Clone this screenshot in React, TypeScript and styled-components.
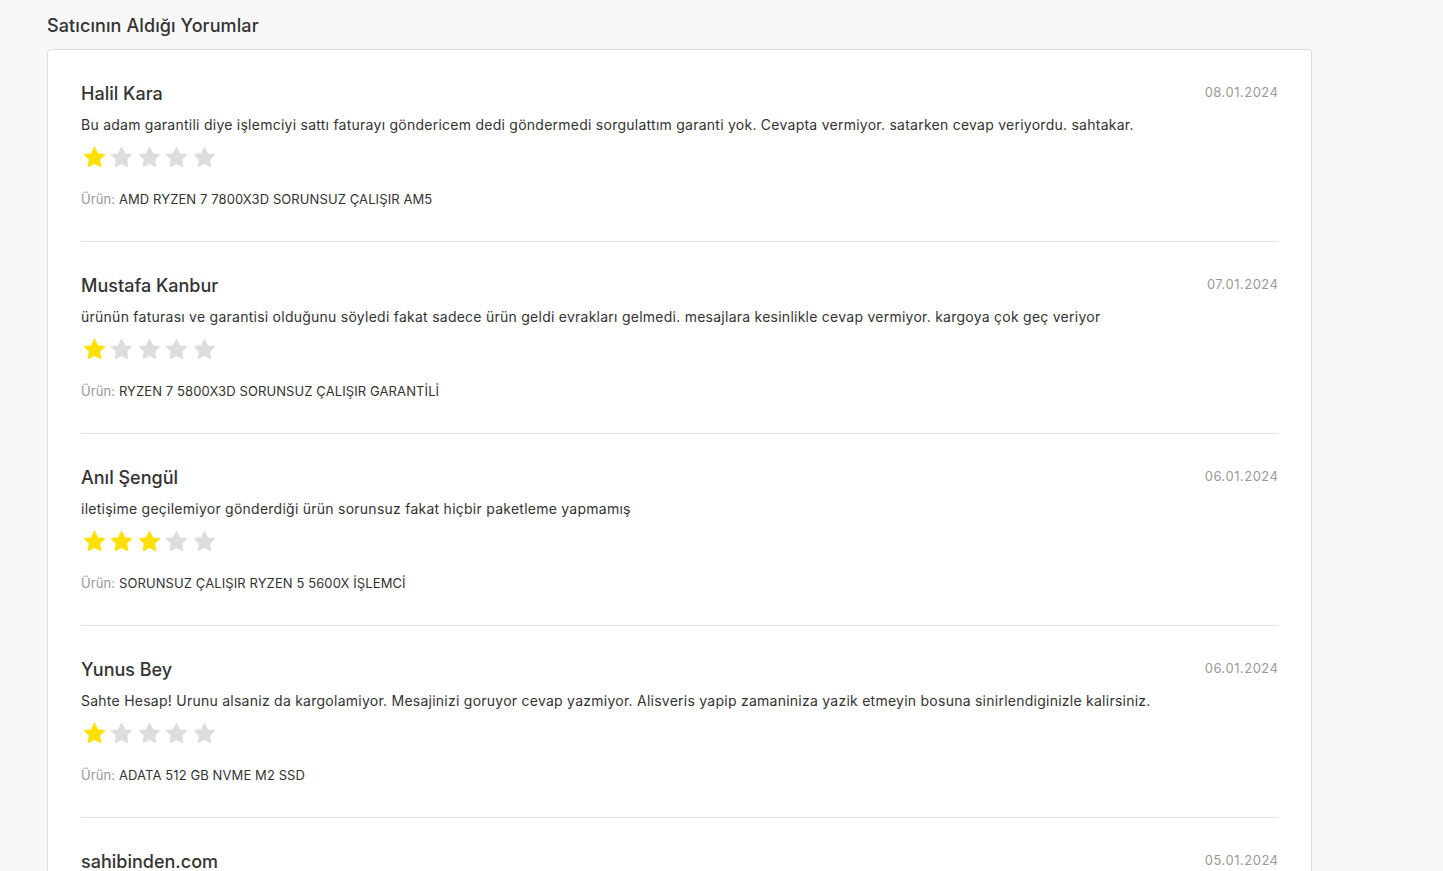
import React from 'react';
import styled, { createGlobalStyle } from 'styled-components';

type Review = {
  name: string;
  date: string;
  text: string;
  rating: number;
  product: string;
};

const reviews: Review[] = [
  {
    name: 'Halil Kara',
    date: '08.01.2024',
    text: 'Bu adam garantili diye işlemciyi sattı faturayı göndericem dedi göndermedi sorgulattım garanti yok. Cevapta vermiyor. satarken cevap veriyordu. sahtakar.',
    rating: 1,
    product: 'AMD RYZEN 7 7800X3D SORUNSUZ ÇALIŞIR AM5',
  },
  {
    name: 'Mustafa Kanbur',
    date: '07.01.2024',
    text: 'ürünün faturası ve garantisi olduğunu söyledi fakat sadece ürün geldi evrakları gelmedi. mesajlara kesinlikle cevap vermiyor. kargoya çok geç veriyor',
    rating: 1,
    product: 'RYZEN 7 5800X3D SORUNSUZ ÇALIŞIR GARANTİLİ',
  },
  {
    name: 'Anıl Şengül',
    date: '06.01.2024',
    text: 'iletişime geçilemiyor gönderdiği ürün sorunsuz fakat hiçbir paketleme yapmamış',
    rating: 3,
    product: 'SORUNSUZ ÇALIŞIR RYZEN 5 5600X İŞLEMCİ',
  },
  {
    name: 'Yunus Bey',
    date: '06.01.2024',
    text: 'Sahte Hesap! Urunu alsaniz da kargolamiyor. Mesajinizi goruyor cevap yazmiyor. Alisveris yapip zamaniniza yazik etmeyin bosuna sinirlendiginizle kalirsiniz.',
    rating: 1,
    product: 'ADATA 512 GB NVME M2 SSD',
  },
  {
    name: 'sahibinden.com',
    date: '05.01.2024',
    text: 'Satıcı ile iletişime geçilemedi.',
    rating: 1,
    product: 'AMD RYZEN 5 5600 İŞLEMCİ',
  },
];

const Star = ({ filled }: { filled: boolean }) => (
  <StarSvg viewBox="0 0 24 24" $filled={filled}>
    <path d="M12 1.8l3.1 6.5 7 .9-5.1 4.9 1.3 7-6.3-3.4-6.3 3.4 1.3-7L1.9 9.2l7-.9z" strokeLinejoin="round" strokeWidth="1.6" />
  </StarSvg>
);

const App = () => {
  return (
    <>
      <GlobalStyle />
      <Page>
        <Title>Satıcının Aldığı Yorumlar</Title>
        <Card>
          {reviews.map((r, i) => (
            <Item key={i} $last={i === reviews.length - 1}>
              <Head>
                <Name>{r.name}</Name>
                <Date>{r.date}</Date>
              </Head>
              <Comment>{r.text}</Comment>
              <Stars>
                {[1, 2, 3, 4, 5].map((n) => (
                  <Star key={n} filled={n <= r.rating} />
                ))}
              </Stars>
              <Product>
                <ProductLabel>Ürün:</ProductLabel> {r.product}
              </Product>
            </Item>
          ))}
        </Card>
      </Page>
    </>
  );
};

export default App;

const GlobalStyle = createGlobalStyle`
  html, body {
    margin: 0;
    padding: 0;
    background: #f8f8f8;
    font-family: Inter, 'Noto Sans', sans-serif;
    color: #333;
  }
`;

const Page = styled.div`
  padding: 14px 131px 0 47px;
  height: 871px;
  overflow: hidden;
  box-sizing: border-box;
`;

const Title = styled.h2`
  margin: 0 0 11px;
  font-size: 18px;
  font-weight: 500;
  line-height: 24px;
  letter-spacing: 0.1px;
  color: #333;
`;

const Card = styled.div`
  background: #fff;
  border: 1px solid #dedede;
  border-radius: 4px;
  padding: 0 33px;
`;

const Item = styled.div<{ $last: boolean }>`
  padding: 32px 0 32px;
  border-bottom: ${(p) => (p.$last ? 'none' : '1px solid #e0e0e0')};
`;

const Head = styled.div`
  display: flex;
  justify-content: space-between;
  align-items: flex-start;
`;

const Name = styled.div`
  font-size: 18px;
  font-weight: 500;
  line-height: 24px;
  color: #333;
`;

const Date = styled.div`
  font-size: 13px;
  line-height: 20px;
  letter-spacing: 0.5px;
  margin-right: -0.5px;
  color: #999;
`;

const Comment = styled.div`
  margin-top: 9px;
  font-size: 14px;
  line-height: 20px;
  letter-spacing: 0.25px;
  color: #333;
`;

const Stars = styled.div`
  display: flex;
  gap: 4.5px;
  margin: 11px 0 0 1.5px;
`;

const StarSvg = styled.svg<{ $filled: boolean }>`
  width: 23px;
  height: 23px;
  fill: ${(p) => (p.$filled ? '#ffe000' : '#dddddd')};
  stroke: ${(p) => (p.$filled ? '#ffe000' : '#dddddd')};
`;

const Product = styled.div`
  margin-top: 20px;
  font-size: 13px;
  line-height: 20px;
  letter-spacing: 0.1px;
  color: #333;
`;

const ProductLabel = styled.span`
  color: #999;
`;
